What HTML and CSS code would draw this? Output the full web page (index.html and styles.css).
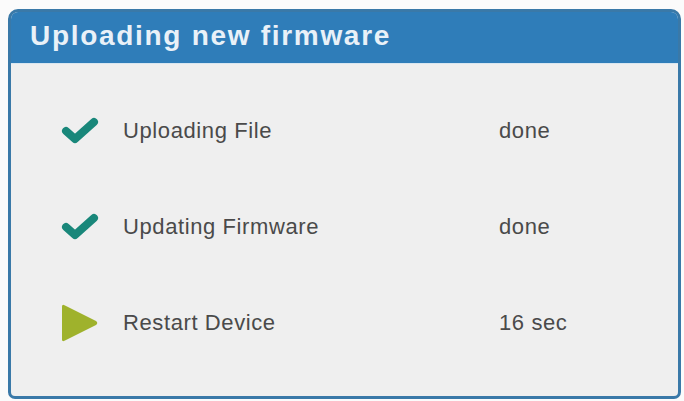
FILE: index.html
```html
<!DOCTYPE html>
<html lang="en">
<head>
    <meta charset="UTF-8">
    <meta name="viewport" content="width=device-width, initial-scale=1.0">
    <title>Firmware Update</title>
    <link rel="stylesheet" href="styles.css">
</head>
<body>
    <div class="dialog">
        <header class="dialog-header">
            <h1>Uploading new firmware</h1>
        </header>
        <main class="dialog-body">
            <!-- Step 1 -->
            <div class="step">
                <svg class="step-icon" viewBox="0 0 38 38">
                    <path class="check" d="M5 19 L14 27 L33 10"/>
                </svg>
                <span class="step-name">Uploading File</span>
                <span class="step-status">done</span>
            </div>

            <!-- Step 2 -->
            <div class="step">
                <svg class="step-icon" viewBox="0 0 38 38">
                    <path class="check" d="M5 19 L14 27 L33 10"/>
                </svg>
                <span class="step-name">Updating Firmware</span>
                <span class="step-status">done</span>
            </div>

            <!-- Step 3 -->
            <div class="step">
                <svg class="step-icon" viewBox="0 0 38 38">
                    <path class="play" d="M1 2.5 Q1 0 3.5 1.2 L35 17 Q37.5 19 35 21 L3.5 36.8 Q1 38 1 35.5 Z"/>
                </svg>
                <span class="step-name">Restart Device</span>
                <span class="step-status">16 sec</span>
            </div>
        </main>
    </div>
</body>
</html>
```

FILE: styles.css
```css
body {
    margin: 0;
    padding: 0;
    background-color: #fbfbfb;
    font-family: "Liberation Sans", Arial, sans-serif;
}
.dialog {
    box-sizing: border-box;
    width: 673px;
    height: 390px;
    margin: 9px 0 0 8px;
    border: 3px solid #3a79a8;
    border-radius: 10px 10px 7px 7px;
    background-color: #efefef;
    overflow: hidden;
}
.dialog-header {
    box-sizing: border-box;
    height: 52px;
    padding: 0 0 4px 19px;
    background-color: #2f7db9;
    border-bottom: 1px solid #d8e6f0;
    display: flex;
    align-items: center;
}
.dialog-header h1 {
    margin: 0;
    font-size: 28px;
    font-weight: bold;
    letter-spacing: 1.7px;
    color: #e9f1f8;
}
.dialog-body {
    padding: 19px 0 0 50px;
}
.step {
    display: flex;
    align-items: center;
    height: 96px;
    font-size: 22px;
    letter-spacing: 0.6px;
    color: #4a4a4a;
}
.step-icon {
    width: 38px;
    height: 38px;
    flex-shrink: 0;
}
.check {
    fill: none;
    stroke: #19877a;
    stroke-width: 8;
    stroke-linecap: round;
    stroke-linejoin: round;
}
.play {
    fill: #9fb22c;
}
.step-name {
    margin-left: 24px;
    width: 376px;
}
.step-status {
    flex: 1;
}
```
